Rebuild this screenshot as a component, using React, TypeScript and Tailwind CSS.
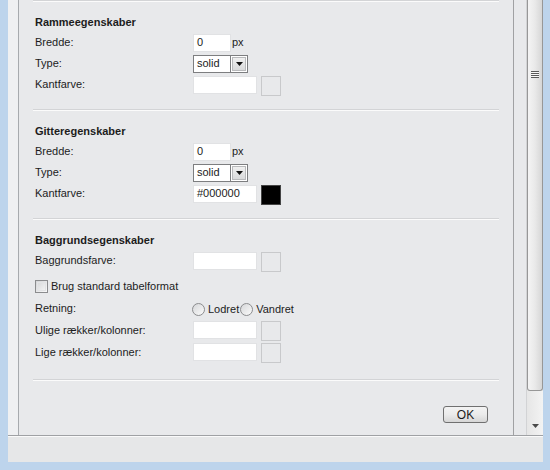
import React from 'react'

const Separator = () => (
    <div className="h-[2px] border-t border-[#d3d4d6] border-b border-b-[#fbfbfb]" />
)

const Row = ({ label, children, h = "h-[21px]", lw = "w-[160px]" }: { label: string; children?: React.ReactNode; h?: string; lw?: string }) => (
    <div className={`flex items-center ${h}`}>
        <span className={`${lw} pl-[2px] shrink-0`}>{label}</span>
        {children}
    </div>
)

const TextInput = ({ value = "", wide = false }: { value?: string; wide?: boolean }) => (
    <div className={`${wide ? "w-[64px]" : "w-[38px]"} h-[18px] bg-white border border-[#e1e2e4] flex items-center pl-[3px] leading-none`}>
        {value}
    </div>
)

const Swatch = ({ black = false }: { black?: boolean }) => (
    <div className={`ml-[4px] mt-[2px] w-[20px] h-[20px] border ${black ? "bg-black border-[#444]" : "border-[#c8c9cb]"}`} />
)

const Select = ({ value }: { value: string }) => (
    <div className="w-[55px] h-[18px] bg-white border border-[#7d7e80] flex">
        <span className="flex-1 flex items-center pl-[3px] leading-none">{value}</span>
        <div className="w-[17px] border-l border-[#7d7e80] p-[1px]">
            <div className="w-full h-full bg-gradient-to-b from-[#f0f0f0] to-[#d9dadb] border border-[#b9babc] flex items-center justify-center">
                <svg width="7" height="4" viewBox="0 0 7 4"><path d="M0 0h7L3.5 4z" fill="#111" /></svg>
            </div>
        </div>
    </div>
)

const Radio = () => (
    <div className="w-[13px] h-[13px] rounded-full border border-[#8b8c8e] bg-gradient-to-br from-[#d6d7d9] to-[#fbfbfb] shrink-0" />
)

const Section = ({ title, children }: { title: string; children: React.ReactNode }) => (
    <div className="pt-[10px]">
        <div className="h-[20px] flex items-center pl-[2px] font-bold">{title}</div>
        {children}
    </div>
)

const App = () => {
    return (
        <div className="w-[550px] h-[470px] bg-[#bdd4ec] flex flex-col pl-[8px] pr-[7px] pb-[8px] overflow-hidden text-[11px] text-[#1c1c1c] font-['Liberation_Sans',Arial,sans-serif]">
            <div className="flex-1 flex flex-col bg-[#eff0f2]">
                <div className="flex h-[435px]">
                    <div className="w-[10px] bg-[#eff0f2]" />
                    <div className="w-[1px] bg-[#a7aaae]" />

                    <main className="w-[494px] bg-[#e8e9eb] px-[14px] flex flex-col overflow-hidden">
                        <Separator />
                        <Section title="Rammeegenskaber">
                            <Row label="Bredde:">
                                <TextInput value="0" />
                                <span className="ml-[1px]">px</span>
                            </Row>
                            <Row label="Type:">
                                <Select value="solid" />
                            </Row>
                            <Row label="Kantfarve:">
                                <TextInput wide />
                                <Swatch />
                            </Row>
                        </Section>
                        <div className="h-[14px]" />
                        <Separator />

                        <Section title="Gitteregenskaber">
                            <Row label="Bredde:">
                                <TextInput value="0" />
                                <span className="ml-[1px]">px</span>
                            </Row>
                            <Row label="Type:">
                                <Select value="solid" />
                            </Row>
                            <Row label="Kantfarve:">
                                <TextInput value="#000000" wide />
                                <Swatch black />
                            </Row>
                        </Section>
                        <div className="h-[14px]" />
                        <Separator />

                        <Section title="Baggrundsegenskaber">
                            <Row label="Baggrundsfarve:">
                                <TextInput wide />
                                <Swatch />
                            </Row>
                            <div className="mt-[4px] h-[22px] flex items-center pl-[2px]">
                                <div className="w-[13px] h-[13px] border border-[#8b8c8e] bg-gradient-to-br from-[#d3d4d6] to-[#f9f9f9] p-[1px]">
                                    <div className="w-full h-full border border-[#e2e3e5]" />
                                </div>
                                <span className="ml-[3px]">Brug standard tabelformat</span>
                            </div>
                            <Row label="Retning:" h="h-[22px]" lw="w-[159px]">
                                <div className="flex items-center mt-[3px]">
                                    <Radio />
                                    <span className="ml-[3px]">Lodret</span>
                                    <div className="ml-[1px]"><Radio /></div>
                                    <span className="ml-[3px]">Vandret</span>
                                </div>
                            </Row>
                            <Row label="Ulige rækker/kolonner:" h="h-[22px]">
                                <TextInput wide />
                                <Swatch />
                            </Row>
                            <Row label="Lige rækker/kolonner:" h="h-[22px]">
                                <TextInput wide />
                                <Swatch />
                            </Row>
                        </Section>
                        <div className="h-[16px]" />
                        <Separator />

                        <div className="flex justify-end mt-[25px] mr-[11px]">
                            <button className="w-[45px] h-[17px] border border-[#707070] rounded-[3px] bg-gradient-to-b from-[#f3f3f3] via-[#ebebeb] to-[#d6d6d6] text-[12px] leading-none flex items-center justify-center">
                                OK
                            </button>
                        </div>
                    </main>

                    <div className="w-[1px] bg-[#a0a1a3]" />
                    <div className="w-[12px] bg-[#e8e9eb]" />
                    <div className="w-[1px] bg-[#d2d3d5]" />

                    {/* scrollbar */}
                    <div className="w-[16px] flex flex-col bg-gradient-to-r from-[#e6e6e6] to-[#f3f3f3]">
                        <div className="h-[391px] border border-t-0 border-[#979797] rounded-b-[3px] bg-gradient-to-r from-[#f4f4f4] via-[#e9e9e9] to-[#d6d6d6] flex justify-center pt-[71px]">
                            <div className="w-[8px] flex flex-col">
                                <div className="h-[1px] bg-[#5a5a5a]" />
                                <div className="h-[1px] bg-[#f8f8f8]" />
                                <div className="h-[1px] bg-[#5a5a5a]" />
                                <div className="h-[1px] bg-[#f8f8f8]" />
                                <div className="h-[1px] bg-[#5a5a5a]" />
                                <div className="h-[1px] bg-[#f8f8f8]" />
                                <div className="h-[1px] bg-[#5a5a5a]" />
                            </div>
                        </div>
                        <div className="flex-1 flex items-end justify-center pb-[7px]">
                            <svg width="7" height="4" viewBox="0 0 7 4"><path d="M0 0h7L3.5 4z" fill="#4a4a4a" /></svg>
                        </div>
                    </div>
                </div>
                <div className="h-[1px] bg-[#9fa1a4]" />
                <div className="h-[1px] bg-[#fafafa]" />
                <div className="flex-1 bg-[#e6e7e8]" />
            </div>
        </div>
    )
}

export default App
